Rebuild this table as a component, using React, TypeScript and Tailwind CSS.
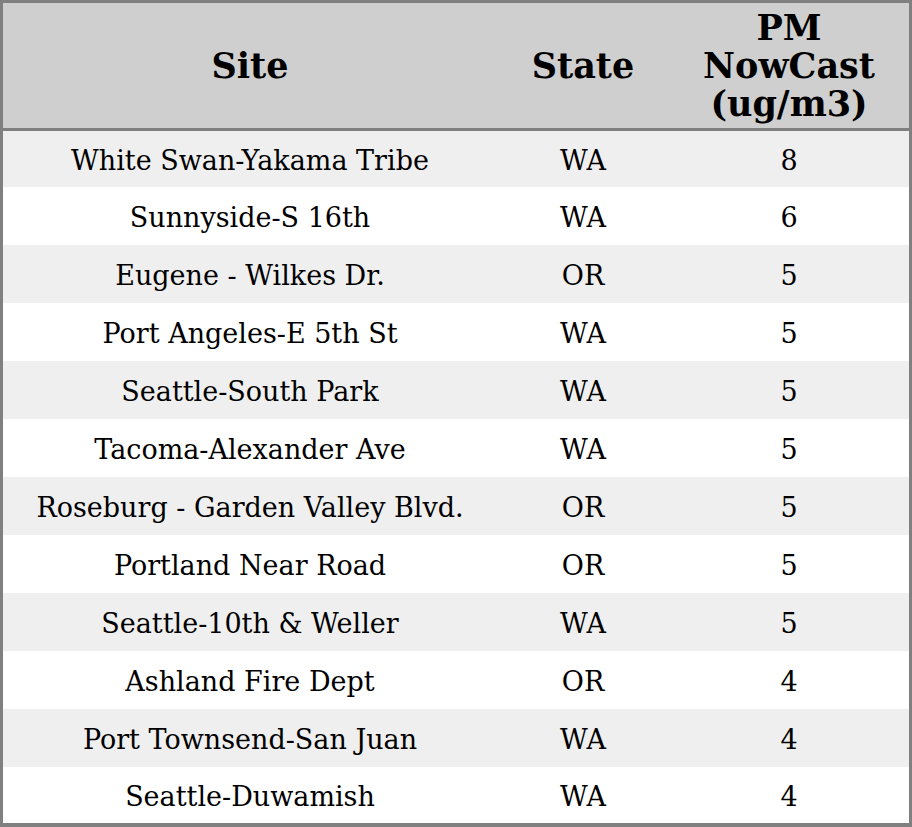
import React from "react";

const rows: [string, string, string][] = [
  ["White Swan-Yakama Tribe", "WA", "8"],
  ["Sunnyside-S 16th", "WA", "6"],
  ["Eugene - Wilkes Dr.", "OR", "5"],
  ["Port Angeles-E 5th St", "WA", "5"],
  ["Seattle-South Park", "WA", "5"],
  ["Tacoma-Alexander Ave", "WA", "5"],
  ["Roseburg - Garden Valley Blvd.", "OR", "5"],
  ["Portland Near Road", "OR", "5"],
  ["Seattle-10th & Weller", "WA", "5"],
  ["Ashland Fire Dept", "OR", "4"],
  ["Port Townsend-San Juan", "WA", "4"],
  ["Seattle-Duwamish", "WA", "4"],
];

export default function App() {
  return (
    <div
      className="w-[912px] h-[827px] bg-white border-[3px] border-b-4 border-[#808080] flex flex-col text-black"
      style={{ fontFamily: '"DejaVu Serif", serif' }}
    >
      <div className="grid grid-cols-[494px_172px_240px] h-[128px] bg-[#cfcfcf] border-b-[3px] border-[#808080] shrink-0 text-[35px] leading-[38px] font-bold">
        <div className="flex items-center justify-center text-center">Site</div>
        <div className="flex items-center justify-center text-center">State</div>
        <div className="flex items-center justify-center text-center">
          PM
          <br />
          NowCast
          <br />
          (ug/m3)
        </div>
      </div>
      {rows.map((r, i) => (
        <div
          key={i}
          className={
            "grid grid-cols-[494px_172px_240px] text-[27px] shrink-0 pt-[4px] " +
            (i % 2 === 0 ? "bg-[#efefef] " : "bg-white ") +
            (i === 0 || i === rows.length - 1 ? "h-[56px]" : "h-[58px]")
          }
        >
          <div className="flex items-center justify-center">{r[0]}</div>
          <div className="flex items-center justify-center">{r[1]}</div>
          <div className="flex items-center justify-center">{r[2]}</div>
        </div>
      ))}
    </div>
  );
}
